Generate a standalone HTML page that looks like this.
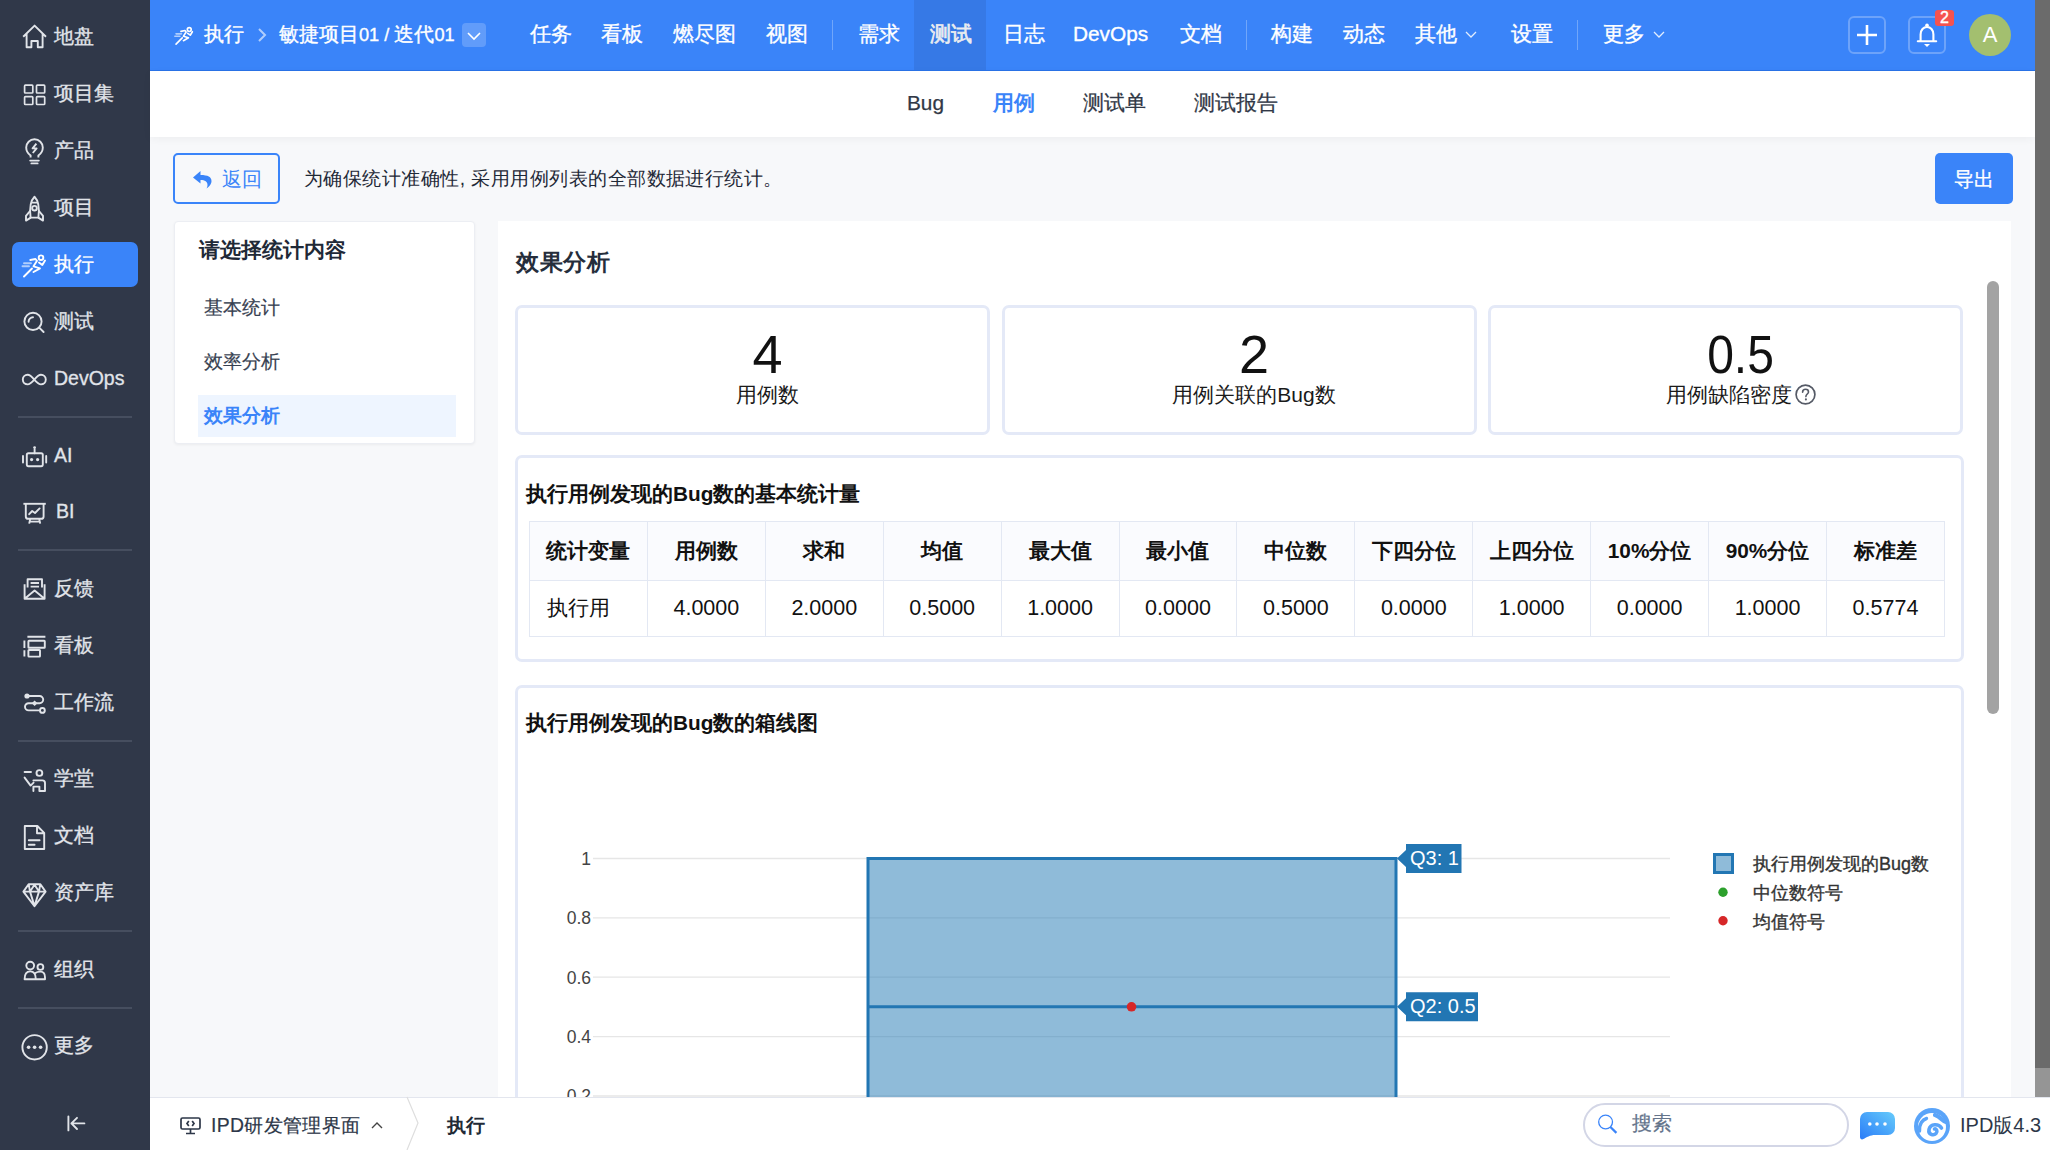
<!DOCTYPE html>
<html><head><meta charset="utf-8">
<style>
*{box-sizing:border-box;margin:0;padding:0}
html,body{width:2050px;height:1150px;overflow:hidden}
body{position:relative;background:#f7f8fa;font-family:"Liberation Sans",sans-serif;color:#1f2937}
.a{position:absolute;white-space:nowrap;line-height:1}
svg{position:absolute;overflow:visible}
#side{position:absolute;left:0;top:0;width:150px;height:1150px;background:#303849}
.si{position:absolute;left:0;width:150px;height:46px}
.si .t{position:absolute;left:54px;top:13px;font-size:19.5px;color:#e1e4e9;line-height:20px;-webkit-text-stroke:0.3px #e1e4e9}
.si svg{left:22px;top:11px}
.div{position:absolute;left:18px;width:114px;height:2px;background:#464e5f}
#top{position:absolute;left:150px;top:0;width:1885px;height:71px;background:#3a84f9;border-bottom:1px solid #2a73e8}
.nv{position:absolute;top:24px;font-size:20.8px;color:#fff;line-height:20px;-webkit-text-stroke:0.35px #fff}
.vd{position:absolute;top:20px;width:1px;height:30px;background:rgba(255,255,255,.28)}
#sub{position:absolute;left:150px;top:71px;width:1885px;height:66px;background:#fff;box-shadow:0 2px 8px rgba(0,0,0,.045)}
.sb{position:absolute;top:22px;font-size:20.8px;color:#313846;line-height:20px;-webkit-text-stroke:0.25px #313846}
#scroll{position:absolute;left:2035px;top:0;width:15px;height:1068px;background:#6b6b6b}
#bottom{position:absolute;left:150px;top:1097px;width:1900px;height:53px;background:#fff;border-top:1px solid #e3e6ee}
.card{position:absolute;background:#fff;border:3px solid #e4e9f7;border-radius:7px}
.num{position:absolute;left:30px;right:0;text-align:center;font-size:54px;color:#111;line-height:54px}
.lab{position:absolute;left:30px;right:0;text-align:center;font-size:21px;color:#1a1a1a;line-height:21px}
table{position:absolute;border-collapse:collapse;table-layout:fixed}
td,th{border:1px solid #e3e8f3;text-align:center;color:#111;padding:0}
th{background:#fafbfe;font-weight:bold;font-size:20.8px;height:58.5px}
td{font-size:21.5px;height:56px}
td.c{font-size:21px;text-align:left;padding-left:17px}
.yl{position:absolute;width:60px;text-align:right;font-size:17.5px;color:#444;line-height:1;left:531px}
.lg{position:absolute;font-size:18px;color:#333;line-height:1;left:1753px;-webkit-text-stroke:0.35px #333}
</style></head><body>

<!-- sidebar -->
<div id="side">
  <div style="position:absolute;left:12px;top:242px;width:126px;height:45px;background:#3a84f9;border-radius:7px"></div>
  <div class="si" style="top:13px"><div class="t">地盘</div></div>
  <div class="si" style="top:70px"><div class="t">项目集</div></div>
  <div class="si" style="top:127px"><div class="t">产品</div></div>
  <div class="si" style="top:184px"><div class="t">项目</div></div>
  <div class="si" style="top:241px"><div class="t" style="color:#fff;-webkit-text-stroke:0.3px #fff">执行</div></div>
  <div class="si" style="top:298px"><div class="t">测试</div></div>
  <div class="si" style="top:355px"><div class="t">DevOps</div></div>
  <div class="div" style="top:416px"></div>
  <div class="si" style="top:432px"><div class="t">AI</div></div>
  <div class="si" style="top:488px"><div class="t" style="left:56px">BI</div></div>
  <div class="div" style="top:549px"></div>
  <div class="si" style="top:565px"><div class="t">反馈</div></div>
  <div class="si" style="top:622px"><div class="t">看板</div></div>
  <div class="si" style="top:679px"><div class="t">工作流</div></div>
  <div class="div" style="top:740px"></div>
  <div class="si" style="top:755px"><div class="t">学堂</div></div>
  <div class="si" style="top:812px"><div class="t">文档</div></div>
  <div class="si" style="top:869px"><div class="t">资产库</div></div>
  <div class="div" style="top:930px"></div>
  <div class="si" style="top:946px"><div class="t">组织</div></div>
  <div class="div" style="top:1007px"></div>
  <div class="si" style="top:1022px"><div class="t">更多</div></div>
  <svg width="150" height="1150" viewBox="0 0 150 1150" style="left:0;top:0">
   <g fill="none" stroke="#e1e4e9" stroke-width="1.9" stroke-linejoin="round">
    <path d="M23.2 36.8 L34.6 25.6 L46 36.8 M26.6 34 V47.2 H31.4 V41 H37.8 V47.2 H42.6 V34"/>
    <rect stroke-width="1.7" x="24.6" y="85.1" width="8.2" height="7.9" rx="0.8"/><rect stroke-width="1.7" x="36.5" y="85.1" width="8.2" height="7.9" rx="0.8"/>
    <rect stroke-width="1.7" x="24.6" y="96.6" width="8.2" height="7.9" rx="0.8"/><rect stroke-width="1.7" x="36.5" y="96.6" width="8.2" height="7.9" rx="0.8"/>
    <path d="M30.6 157.6 V155.6 C27.8 153.6 26.2 150.8 26.2 147.6 A8.3 8.3 0 0 1 42.8 147.6 C42.8 150.8 41.2 153.6 38.4 155.6 V157.6"/>
    <path d="M30.2 160.6 H38.8 M31.4 163.4 H37.6" stroke-linecap="round"/>
    <path d="M36.4 143.6 L32.6 148.4 H36.6 L32.8 153"/>
    <path d="M34.5 196.8 C30.4 200.8 29.4 208 30.6 217.6 H38.4 C39.6 208 38.6 200.8 34.5 196.8 Z M31 202.6 H38"/>
    <circle cx="34.5" cy="208.2" r="2.3"/>
    <path d="M30.4 210.6 L26 215.8 V220.6 L30.8 217.6 M38.6 210.6 L43 215.8 V220.6 L38.2 217.6"/>
    <circle cx="33" cy="321.4" r="8.6"/>
    <path d="M28.6 321.8 A4.4 4.4 0 0 1 33 317.2 M39.2 327.6 L43.6 332" stroke-linecap="round"/>
    <path d="M34.3 379.6 C31.6 376.4 29.6 374.8 27.6 374.8 A4.8 4.8 0 0 0 27.6 384.4 C29.6 384.4 31.6 382.8 34.3 379.6 C37 376.4 39 374.8 41 374.8 A4.8 4.8 0 0 1 41 384.4 C39 384.4 37 382.8 34.3 379.6 Z"/>
    <rect x="26.8" y="453.2" width="16" height="13" rx="1.6"/>
    <path d="M34.6 449.2 V453.2 M23 456 V462.6 M46.2 456 V462.6" stroke-linecap="round"/>
    <circle cx="34.6" cy="447.6" r="1.4" fill="#e1e4e9" stroke="none"/>
    <path d="M23.4 503.8 H45.8"/>
    <path d="M25.8 503.8 V516.4 A2.4 2.4 0 0 0 28.2 518.8 H41.2 A2.4 2.4 0 0 0 43.6 516.4 V503.8"/>
    <path d="M29.2 514.2 L32.2 511 L35 513 L39.6 508.4" stroke-linecap="round"/>
    <path d="M30.2 519 L29.2 523.6 M39.2 519 L40.2 523.6 M29.6 521.6 H39.8"/>
    <path d="M27.6 587.6 V579.2 H42 V587.6 M24.6 584.2 V598.8 H44.6 V584.2 M24.6 598.8 L34.6 590.6 L44.6 598.8 M30.6 583 H39 M30.6 586.6 H39"/>
    <path d="M27.4 636.8 H45.4 M24.4 640.6 V648 M24.4 650.2 V656.4"/>
    <rect x="28.4" y="640.8" width="16.4" height="7" rx="0.6"/>
    <rect x="28.4" y="650" width="11.6" height="6.6" rx="0.6"/>
    <path d="M27 696 H39.6 A3.6 3.6 0 0 1 39.6 703.2 H28.6 A3.6 3.6 0 0 0 28.6 710.4 H39.6"/>
    <circle cx="42.4" cy="710.4" r="2.4"/>
    <path d="M24.6 772 H31 M24.6 777.6 L30.6 785.6 L33.6 782.6 M33.4 780.4 H42.4 A2.6 2.6 0 0 1 45 783 V791 H39.4 V786.6 H33.4 V791" stroke-linecap="round"/>
    <circle cx="39.4" cy="773" r="2.9"/>
    <path d="M24.8 826 H37.4 L44.2 832.8 V849 H24.8 Z M37 826.4 V833.2 H43.8 M28.8 840.2 H39.6 M28.8 844.8 H34.6" stroke-linecap="round"/>
    <path d="M28.6 884.2 H40.4 L45.6 891.6 L34.5 906.2 L23.4 891.6 Z M23.4 891.6 H45.6 M30 891.6 L34.5 906 L39 891.6 M28.8 884.6 L30 891.6 L34.5 884.8 L39 891.6 L40.2 884.6"/>
    <circle cx="30.2" cy="965.6" r="3.9"/>
    <circle cx="40.4" cy="967" r="2.9"/>
    <path d="M24.6 979.2 C24.6 973.6 27 971.4 30.2 971.4 C33.6 971.4 35.8 973.6 35.8 979.2 Z M35 973.2 C36.4 972.2 38.4 971.6 40.4 971.6 C43 971.6 45 973.4 45 977.2 V979.2 H36"/>
    <circle cx="34.6" cy="1047.3" r="12.2"/>
    <path d="M68.4 1116.4 V1130.4 M84.4 1123.4 H71.4 M77 1117.8 L71.4 1123.4 L77 1129" stroke-linecap="round"/>
   </g>
   <g fill="#e1e4e9"><circle cx="31.6" cy="459.6" r="1.6"/><circle cx="37.6" cy="459.6" r="1.6"/><circle cx="27" cy="696" r="2.6"/><path d="M34.6 700.4 L37.4 703.2 L34.6 706 L31.8 703.2 Z"/>
   <circle cx="28.6" cy="1047.3" r="1.8"/><circle cx="34.6" cy="1047.3" r="1.8"/><circle cx="40.6" cy="1047.3" r="1.8"/></g>
   <g fill="none" stroke="#fff" stroke-width="1.9" stroke-linecap="round" stroke-linejoin="round"><circle cx="41" cy="257.7" r="2.3"/><path d="M30.3 260 L35.5 259 L37 260.8 L33.5 266.3 L40 268.3 L33.5 272 M39 262.5 L42.3 265 L45 260.5 M32 268.5 L24 276.5"/><path d="M24 263.2 H31 M22.5 266.3 H29" stroke-opacity="0.6"/></g>
  </svg>
</div>

<!-- top bar -->
<div id="top">
  <svg width="31.2" height="28" viewBox="0 0 40 36" style="left:18.8px;top:21.6px"><g fill="none" stroke="#fff" stroke-width="2.1" stroke-linecap="round" stroke-linejoin="round"><circle cx="26" cy="9.7" r="2.5"/><path d="M15.3 12 L20.5 11 L22 12.8 L18.5 18.3 L25 20.3 L18.5 24 M24 14.5 L27.3 17 L30 12.5 M17 20.5 L9 28.5"/><path d="M9 15.2 H16 M7.5 18.3 H14" stroke-opacity="0.6"/></g></svg>
  <div class="nv" style="left:54px;font-size:20px">执行</div>
  <svg width="10" height="14" viewBox="0 0 10 14" style="left:107px;top:28px"><path d="M2 1 L8 7 L2 13" fill="none" stroke="rgba(255,255,255,.6)" stroke-width="2"/></svg>
  <div class="nv" style="left:129px;font-size:20px">敏捷项目<span style="font-size:18.2px">01 / </span>迭代<span style="font-size:18.2px">01</span></div>
  <div style="position:absolute;left:312px;top:23px;width:24px;height:24px;border-radius:4px;background:rgba(255,255,255,.2)"></div>
  <svg width="14" height="8" viewBox="0 0 14 8" style="left:317px;top:32px"><path d="M1 1 L7 7 L13 1" fill="none" stroke="#fff" stroke-width="1.6"/></svg>

  <div class="nv" style="left:379.5px">任务</div>
  <div class="nv" style="left:451px">看板</div>
  <div class="nv" style="left:523px">燃尽图</div>
  <div class="nv" style="left:616px">视图</div>
  <div class="vd" style="left:682px"></div>
  <div class="nv" style="left:708px">需求</div>
  <div style="position:absolute;left:764px;top:0;width:72px;height:70px;background:#3679e6"></div>
  <div class="nv" style="left:780px;color:#ebedf0;-webkit-text-stroke:0.7px #ebedf0">测试</div>
  <div class="nv" style="left:853px">日志</div>
  <div class="nv" style="left:923px">DevOps</div>
  <div class="nv" style="left:1029.5px">文档</div>
  <div class="vd" style="left:1096px"></div>
  <div class="nv" style="left:1121px">构建</div>
  <div class="nv" style="left:1193px">动态</div>
  <div class="nv" style="left:1265px">其他</div>
  <svg width="12" height="8" viewBox="0 0 12 8" style="left:1315px;top:31px"><path d="M1 1 L6 6 L11 1" fill="none" stroke="rgba(255,255,255,.85)" stroke-width="1.3"/></svg>
  <div class="nv" style="left:1361px">设置</div>
  <div class="vd" style="left:1427px"></div>
  <div class="nv" style="left:1453px">更多</div>
  <svg width="12" height="8" viewBox="0 0 12 8" style="left:1503px;top:31px"><path d="M1 1 L6 6 L11 1" fill="none" stroke="rgba(255,255,255,.85)" stroke-width="1.3"/></svg>

  <div style="position:absolute;left:1698px;top:16px;width:38px;height:38px;border:2px solid rgba(255,255,255,.26);border-radius:6px"></div>
  <svg width="20" height="20" viewBox="0 0 20 20" style="left:1707px;top:25px"><path d="M10 0 V20 M0 10 H20" stroke="#fff" stroke-width="2.6"/></svg>
  <div style="position:absolute;left:1758px;top:16px;width:38px;height:38px;border:2px solid rgba(255,255,255,.26);border-radius:6px"></div>
  <svg width="20" height="24" viewBox="0 0 20 24" style="left:1767px;top:23px"><g fill="none" stroke="#fff" stroke-width="2.1"><path d="M3.6 18.2 V11.5 C3.6 7 6.5 4 10 4 C13.5 4 16.4 7 16.4 11.5 V18.2"/><path d="M0.8 18.3 H19.2" stroke-linecap="round"/></g><circle cx="10" cy="2.3" r="1.8" fill="#fff"/><path d="M7 21 H13 L10 24 Z" fill="#fff"/></svg>
  <div style="position:absolute;left:1785px;top:10px;width:19px;height:16px;background:#f5534f;border-radius:3px;color:#fff;font-size:16px;line-height:16px;text-align:center;-webkit-text-stroke:0.4px #fff">2</div>
  <div style="position:absolute;left:1819px;top:14px;width:42px;height:42px;border-radius:50%;background:#a3bf6f;color:#fff;font-size:22px;line-height:42px;text-align:center">A</div>
</div>

<!-- sub nav -->
<div id="sub">
  <div class="sb" style="left:757px">Bug</div>
  <div class="sb" style="left:843px;color:#3a84f9;font-weight:bold;-webkit-text-stroke:0">用例</div>
  <div class="sb" style="left:933px">测试单</div>
  <div class="sb" style="left:1044px">测试报告</div>
</div>

<!-- toolbar -->
<div style="position:absolute;left:173px;top:153px;width:107px;height:51px;border:2px solid #3a84f9;border-radius:5px"></div>
<svg width="20" height="18" viewBox="0 0 20 18" style="left:193px;top:171px"><path d="M7.5 0 L0 6.5 L7.5 12.5 V9 C12 9 14.5 10.5 14.5 14 C14.5 15.5 14 16.5 13.5 17.5 C17.5 15 18.5 12 18.5 10 C18.5 6 15 4 7.5 4 Z" fill="#3a84f9"/></svg>
<div class="a" style="left:222px;top:169px;font-size:20px;color:#3a84f9">返回</div>
<div class="a" style="left:304px;top:169px;font-size:19.4px;letter-spacing:0.46px;color:#1f2937">为确保统计准确性, 采用用例列表的全部数据进行统计。</div>
<div style="position:absolute;left:1934.5px;top:153px;width:78px;height:51px;background:#3a84f9;border-radius:5px"></div>
<div class="a" style="left:1954px;top:169px;font-size:20px;color:#fff;-webkit-text-stroke:0.3px #fff">导出</div>

<!-- left panel -->
<div style="position:absolute;left:173.5px;top:220.5px;width:301px;height:223px;background:#fff;border-radius:4px;border:1px solid #eceef3;box-shadow:0 1px 3px rgba(0,0,0,.05)"></div>
<div class="a" style="left:199px;top:240px;font-size:20.9px;font-weight:bold;color:#1f2937">请选择统计内容</div>
<div class="a" style="left:204px;top:298px;font-size:19.4px;color:#374151;-webkit-text-stroke:0.2px #374151">基本统计</div>
<div class="a" style="left:204px;top:352px;font-size:19.4px;color:#374151;-webkit-text-stroke:0.2px #374151">效率分析</div>
<div style="position:absolute;left:198px;top:395px;width:258px;height:42px;background:#eef5ff"></div>
<div class="a" style="left:204px;top:406px;font-size:19.4px;font-weight:bold;color:#3a84f9">效果分析</div>

<!-- main panel -->
<div style="position:absolute;left:498px;top:221px;width:1513px;height:876px;background:#fff"></div>
<div class="a" style="left:516px;top:251px;font-size:23px;font-weight:bold;color:#252d3b;letter-spacing:0.6px">效果分析</div>
<div style="position:absolute;left:1987px;top:281px;width:12px;height:433px;background:#a3a3a3;border-radius:6px"></div>

<div class="card" style="left:515px;top:305px;width:475px;height:130px">
  <div class="num" style="top:19px">4</div><div class="lab" style="top:76px">用例数</div>
</div>
<div class="card" style="left:1001.5px;top:305px;width:475px;height:130px">
  <div class="num" style="top:19px">2</div><div class="lab" style="top:76px">用例关联的Bug数</div>
</div>
<div class="card" style="left:1488px;top:305px;width:475px;height:130px">
  <div class="num" style="top:19px"><span style="display:inline-block;transform:scaleX(0.89)">0.5</span></div><div class="lab" style="top:76px">用例缺陷密度<svg width="21" height="21" viewBox="0 0 21 21" style="position:relative;display:inline-block;vertical-align:top;margin-left:3px;top:-0.5px"><circle cx="10.5" cy="10.5" r="9.4" fill="none" stroke="#555a66" stroke-width="1.7"/><path d="M7.6 8.2 C7.6 6.3 9 5.3 10.6 5.3 C12.3 5.3 13.5 6.4 13.5 7.9 C13.5 9.9 10.9 10.2 10.9 12.6" fill="none" stroke="#555a66" stroke-width="1.6" stroke-linecap="round"/><circle cx="10.9" cy="15.4" r="1.05" fill="#555a66"/></svg></div>
</div>

<div class="card" style="left:515px;top:455px;width:1449px;height:207px">
  <div class="a" style="left:8px;top:26px;font-size:20.8px;font-weight:bold;color:#111">执行用例发现的Bug数的基本统计量</div>
  <table style="left:11px;top:63px;width:1416px">
    <tr><th>统计变量</th><th>用例数</th><th>求和</th><th>均值</th><th>最大值</th><th>最小值</th><th>中位数</th><th>下四分位</th><th>上四分位</th><th>10%分位</th><th>90%分位</th><th>标准差</th></tr>
    <tr><td class="c">执行用</td><td>4.0000</td><td>2.0000</td><td>0.5000</td><td>1.0000</td><td>0.0000</td><td>0.5000</td><td>0.0000</td><td>1.0000</td><td>0.0000</td><td>1.0000</td><td>0.5774</td></tr>
  </table>
</div>

<div class="card" style="left:515px;top:685px;width:1449px;height:500px;border-bottom:none">
  <div class="a" style="left:8px;top:25px;font-size:20.8px;font-weight:bold;color:#111">执行用例发现的Bug数的箱线图</div>
</div>

<!-- chart -->
<svg width="2050" height="1150" style="left:0;top:0">
  <g stroke="#e6e6e6" stroke-width="1.3">
    <path d="M593 858.5 H1670 M593 917.8 H1670 M593 977.2 H1670 M593 1036.6 H1670 M593 1096 H1670"/>
  </g>
  <rect x="868" y="858.5" width="528" height="260" fill="#1f77b4" fill-opacity="0.5" stroke="#2276b3" stroke-width="3"/>
  <path d="M868 1006.8 H1396" stroke="#2276b3" stroke-width="3"/>
  <circle cx="1131.5" cy="1006.8" r="4.8" fill="#d62728"/>
  <path d="M1397 858.5 L1406 850 V844 H1461.5 V873 H1406 V867 Z" fill="#2276b3"/>
  <path d="M1397 1006.8 L1406 998.3 V992.3 H1478 V1021.3 H1406 V1015.3 Z" fill="#2276b3"/>
  <rect x="1714.5" y="854.5" width="18" height="18" fill="#8fbbd9" stroke="#2276b3" stroke-width="3"/>
  <circle cx="1723" cy="892.2" r="4.7" fill="#2ca02c"/>
  <circle cx="1723" cy="920.7" r="4.7" fill="#d62728"/>
</svg>
<div class="a" style="left:1410px;top:848px;font-size:20px;color:#fff">Q3: 1</div>
<div class="a" style="left:1410px;top:996px;font-size:20px;color:#fff">Q2: 0.5</div>
<div class="yl" style="top:850.5px">1</div>
<div class="yl" style="top:910px">0.8</div>
<div class="yl" style="top:969.5px">0.6</div>
<div class="yl" style="top:1029px">0.4</div>
<div class="yl" style="top:1088px">0.2</div>
<div class="lg" style="top:855px">执行用例发现的Bug数</div>
<div class="lg" style="top:883.5px">中位数符号</div>
<div class="lg" style="top:912.5px">均值符号</div>

<div id="scroll"></div>
<div style="position:absolute;left:2035px;top:1068px;width:15px;height:29px;background:#959595"></div>

<!-- bottom bar -->
<div id="bottom">
  <svg width="22" height="20" viewBox="0 0 22 20" style="left:30px;top:19px"><g fill="none" stroke="#2d3748" stroke-width="1.7"><rect x="1" y="1" width="19" height="11" rx="1.5"/><path d="M10.5 12 V16.5 M6 16.5 H15 M8.8 4 L7 6.5 L8.8 9 M12.2 4 L14 6.5 L12.2 9"/></g></svg>
  <div class="a" style="left:61px;top:18px;font-size:19.4px;letter-spacing:0.35px;color:#2d3748;-webkit-text-stroke:0.2px #2d3748">IPD研发管理界面</div>
  <svg width="12" height="8" viewBox="0 0 12 8" style="left:221px;top:23px"><path d="M1 7 L6 2 L11 7" fill="none" stroke="#444" stroke-width="1.4"/></svg>
  <svg width="14" height="53" viewBox="0 0 14 53" style="left:256px;top:-1px"><path d="M1 0 L12 26 L1 53" fill="none" stroke="#dedede" stroke-width="1.2"/></svg>
  <div class="a" style="left:297px;top:18px;font-size:19.4px;font-weight:bold;color:#222a36">执行</div>
  <div style="position:absolute;left:1433px;top:5px;width:266px;height:44px;border:2px solid #d3d6e6;border-radius:22px"></div>
  <svg width="22" height="22" viewBox="0 0 22 22" style="left:1447px;top:15px"><g fill="none" stroke="#3a84f9"><circle cx="8.6" cy="9" r="6.9" stroke-width="1.3"/><path d="M13.4 14 L19.4 19.9" stroke-width="2.2"/></g></svg>
  <div class="a" style="left:1482px;top:16px;font-size:19.5px;color:#64748b;-webkit-text-stroke:0.2px #64748b">搜索</div>
  <svg width="35" height="28" viewBox="0 0 35 28" style="left:1710px;top:14px"><defs><linearGradient id="g1" x1="0" y1="1" x2="1" y2="0"><stop offset="0" stop-color="#2a7cf8"/><stop offset="1" stop-color="#66cbfb"/></linearGradient></defs><path d="M7 0 H28 A7 7 0 0 1 35 7 V16 A7 7 0 0 1 28 23 H15 C10.5 23 6 25.5 3.5 27 C1.8 28 0 27.2 0 25 V7 A7 7 0 0 1 7 0 Z" fill="url(#g1)"/><g fill="#fff"><circle cx="9.8" cy="12" r="1.8"/><circle cx="17" cy="12" r="1.8"/><circle cx="25" cy="12" r="1.8"/></g></svg>
  <svg width="36" height="36" viewBox="0 0 36 36" style="left:1764px;top:10px"><circle cx="18" cy="18" r="18" fill="#5aa4f9"/><circle cx="18" cy="19" r="14" fill="#fff"/><g fill="none" stroke="#5aa4f9" stroke-linecap="round"><path d="M5.5 23 C5 16 8.5 11.5 12.5 10.5" stroke-width="3.4"/><path d="M27.5 20 C24.5 15.5 16.5 15.5 15 21.5 C14 26.5 19.5 28 22 25.5 C24 23.5 22.5 20.5 20.5 21" stroke-width="3.6"/><path d="M21 7 C26.5 8.5 28.5 13.5 33 14.5" stroke-width="4.2"/></g></svg>
  <div class="a" style="left:1810px;top:17px;font-size:20px;color:#2d3748">IPD版4.3</div>
</div>

</body></html>
